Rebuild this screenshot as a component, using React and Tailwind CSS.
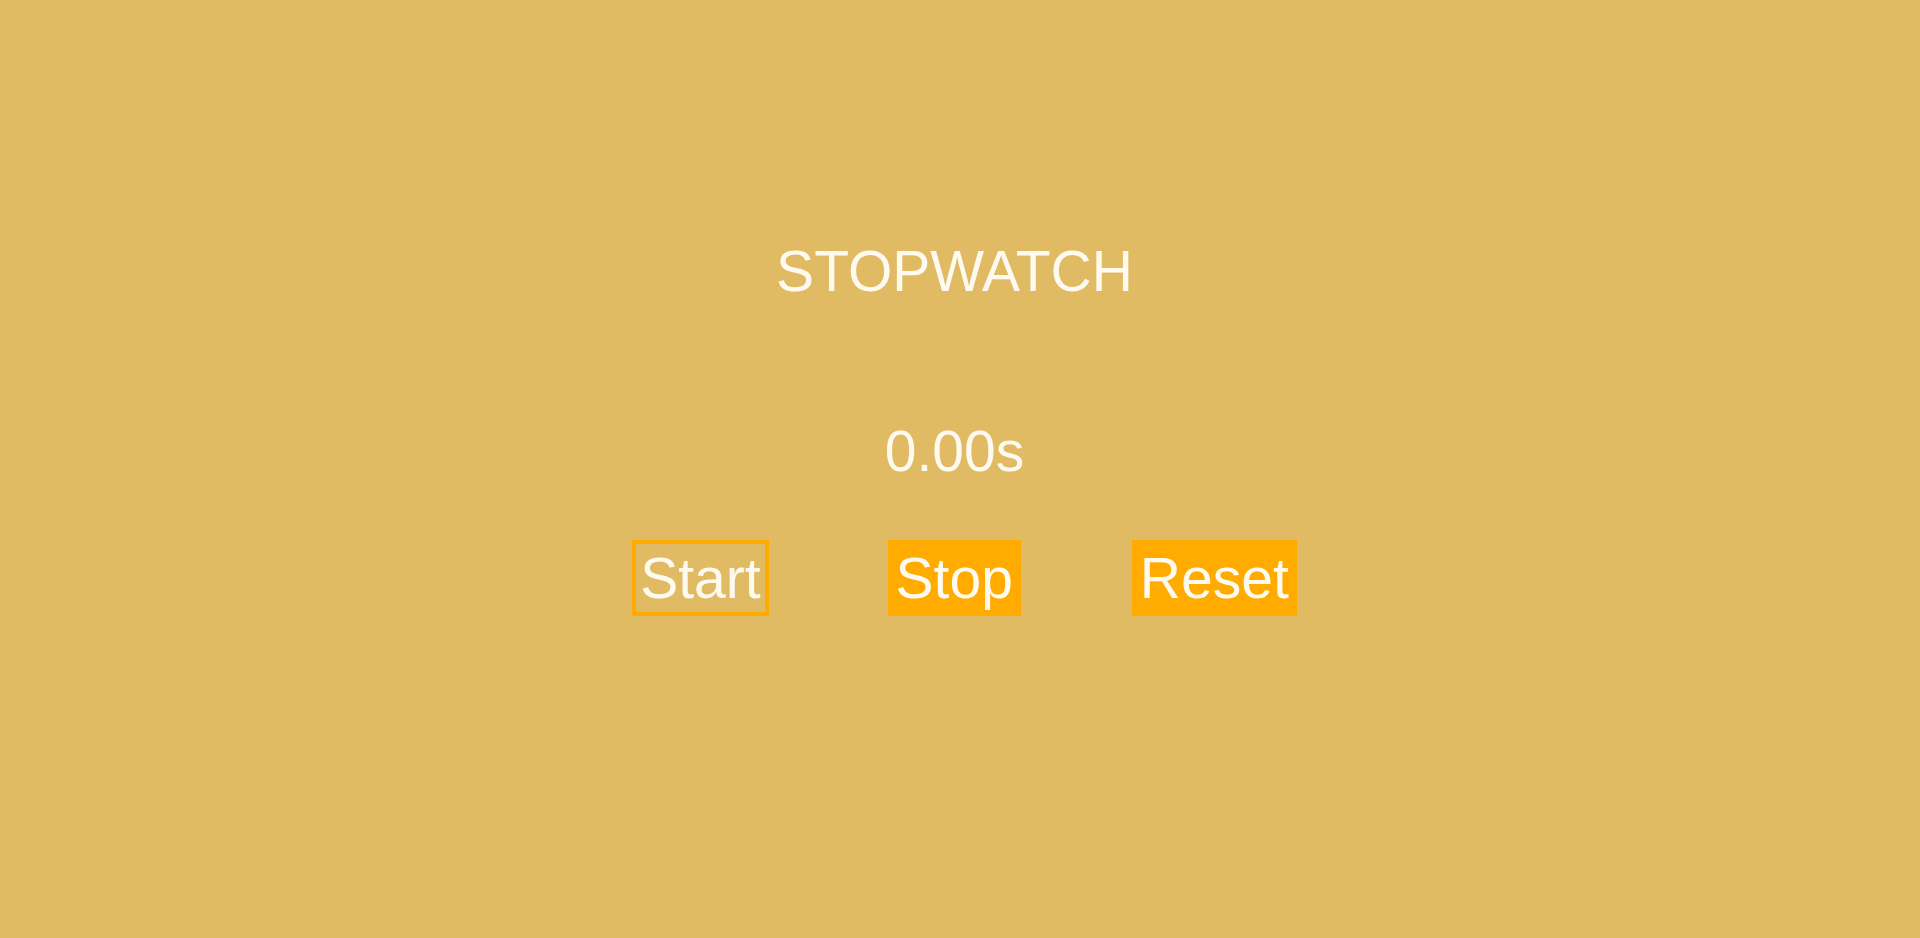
import React, { useEffect, useRef, useState } from 'react';

function App() {
  const [time, setTime] = useState(0);
  const [running, setRunning] = useState(false);
  const timer = useRef(null);

  useEffect(() => {
    if (running) {
      timer.current = setInterval(() => setTime(t => t + 0.01), 10);
    }
    return () => clearInterval(timer.current);
  }, [running]);

  const handleStart = () => setRunning(true);
  const handleStop = () => setRunning(false);
  const handleReset = () => {
    setRunning(false);
    setTime(0);
  };

  return (
    <div className="min-h-[938px] w-full bg-[#e1ba64] font-['Liberation_Sans',Arial,sans-serif] text-[#fffaf0]">
      <div className="flex w-[1909px] flex-col items-center pt-[239px]">
        <h1 className="text-[57px] leading-[64px] font-normal">STOPWATCH</h1>
        <div className="mt-[116px] text-[57px] leading-[64px]">{time.toFixed(2)}s</div>
        <div className="mt-[57px] flex pl-[20px]">
          <button
            className="border-4 border-[#ffab00] px-[4px] py-[2px] text-[57px] leading-[64px]"
            onClick={handleStart}
          >
            Start
          </button>
          <button
            className="ml-[119px] border-4 border-[#ffab00] bg-[#ffab00] px-[4px] py-[2px] text-[57px] leading-[64px]"
            onClick={handleStop}
          >
            Stop
          </button>
          <button
            className="ml-[111px] border-4 border-[#ffab00] bg-[#ffab00] px-[4px] py-[2px] text-[57px] leading-[64px]"
            onClick={handleReset}
          >
            Reset
          </button>
        </div>
      </div>
    </div>
  );
}

export default App;
